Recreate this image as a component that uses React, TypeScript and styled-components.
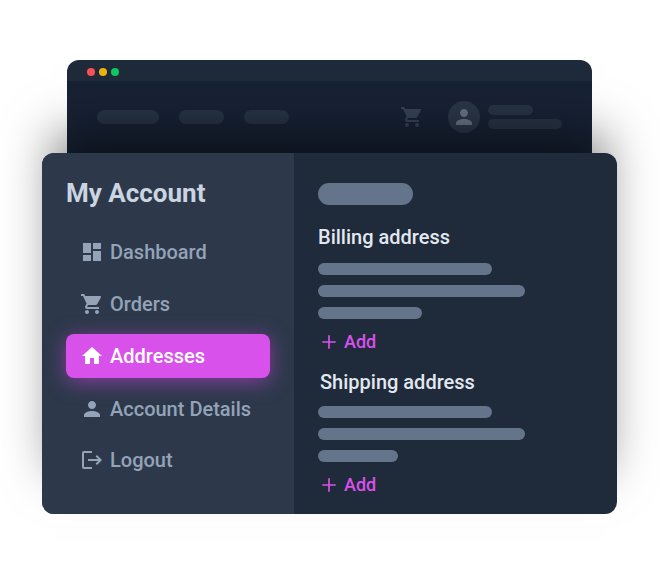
import React from "react";
import styled, { createGlobalStyle } from "styled-components";

const GlobalStyle = createGlobalStyle`
  * { box-sizing: border-box; }
  body { margin: 0; background: #fff; font-family: Roboto, sans-serif; }
`;

const Page = styled.main`
  width: 660px;
  height: 572px;
  padding: 60px 43px 0 42px;
  overflow: hidden;
  background: #fff;
`;

const BrowserWindow = styled.section`
  margin: 0 25px;
  height: 93px;
`;

const TitleBar = styled.div`
  height: 21px;
  display: flex;
  align-items: center;
  gap: 4px;
  padding: 3px 20px 0;
  border-radius: 12px 12px 0 0;
  background: #1f2a3b;
`;

const Dot = styled.span<{ $color: string }>`
  width: 8px;
  height: 8px;
  border-radius: 50%;
  background: ${(p) => p.$color};
`;

const SiteHeader = styled.header`
  height: 72px;
  display: flex;
  align-items: center;
  padding: 0 30px;
  background: #182235;
`;

const Nav = styled.nav`
  display: flex;
  gap: 20px;
  margin-right: auto;
`;

const Bar = styled.span<{ $w: number; $h: number; $color: string }>`
  display: block;
  width: ${(p) => p.$w}px;
  height: ${(p) => p.$h}px;
  border-radius: ${(p) => p.$h / 2}px;
  background: ${(p) => p.$color};
`;

const Avatar = styled.div`
  display: grid;
  place-items: center;
  width: 32px;
  height: 32px;
  margin: 0 8px 0 24px;
  border-radius: 50%;
  background: #2a3648;
  color: #677282;
`;

const UserLines = styled.div`
  width: 74px;
  display: flex;
  flex-direction: column;
  gap: 4px;
`;

const CartSlot = styled.div`
  display: flex;
  color: #364255;
`;

const Panel = styled.section`
  position: relative;
  display: flex;
  height: 361px;
  border-radius: 12px;
  background: #1f2a3b;
  box-shadow: 0 -31px 46px -12px rgba(0, 0, 0, 0.5);
`;

const Sidebar = styled.aside`
  width: 252px;
  padding: 24px 24px 0;
  border-radius: 12px 0 0 12px;
  background: #2d394b;
`;

const Title = styled.h1`
  margin: 0;
  font-size: 26px;
  line-height: 32px;
  font-weight: 700;
  color: #cbd5e1;
`;

const Menu = styled.ul`
  list-style: none;
  margin: 21px 0 0;
  padding: 0;
  display: flex;
  flex-direction: column;
  gap: 8px;
`;

const MenuItem = styled.li<{ $active?: boolean; $shift?: number }>`
  display: flex;
  align-items: center;
  gap: 6px;
  height: 44px;
  padding-left: 14px;
  margin-top: ${(p) => p.$shift ?? 0}px;
  border-radius: 8px;
  font-size: 20px;
  font-weight: 500;
  white-space: nowrap;
  color: ${(p) => (p.$active ? "#fff" : "#94a3b8")};
  background: ${(p) => (p.$active ? "#d951eb" : "transparent")};
  box-shadow: ${(p) => (p.$active ? "0 4px 20px rgba(217, 70, 239, 0.5)" : "none")};
`;

const Content = styled.div`
  flex: 1;
  padding: 30px 24px 0;
`;

const Address = styled.section<{ $top: number }>`
  margin-top: ${(p) => p.$top}px;
`;

const AddressTitle = styled.h2<{ $indent?: number }>`
  margin: 0;
  padding-left: ${(p) => p.$indent ?? 0}px;
  font-size: 20px;
  line-height: 24px;
  font-weight: 500;
  color: #e2e8f0;
`;

const Lines = styled.div<{ $top: number }>`
  display: flex;
  flex-direction: column;
  gap: 10px;
  margin-top: ${(p) => p.$top}px;
`;

const AddButton = styled.button`
  display: flex;
  align-items: center;
  gap: 8px;
  height: 22px;
  margin: 12px 0 0;
  padding: 0 0 0 4px;
  border: 0;
  background: none;
  font: 500 18px/22px Roboto, sans-serif;
  color: #d951eb;
`;

const icons = {
  dashboard: "M3 13h8V3H3v10zm0 8h8v-6H3v6zm10 0h8V11h-8v10zm0-18v6h8V3h-8z",
  cart: "M7 18c-1.1 0-1.99.9-1.99 2S5.9 22 7 22s2-.9 2-2-.9-2-2-2zM1 2v2h2l3.6 7.59-1.35 2.45c-.16.28-.25.61-.25.96 0 1.1.9 2 2 2h12v-2H7.42c-.14 0-.25-.11-.25-.25l.03-.12.9-1.63h7.45c.75 0 1.41-.41 1.75-1.03l3.58-6.49c.08-.14.12-.31.12-.48 0-.55-.45-1-1-1H5.21l-.94-2H1zm16 16c-1.1 0-1.99.9-1.99 2s.89 2 1.99 2 2-.9 2-2-.9-2-2-2z",
  home: "M10 20v-6h4v6h5v-8h3L12 3 2 12h3v8z",
  person: "M12 12c2.21 0 4-1.79 4-4s-1.79-4-4-4-4 1.79-4 4 1.79 4 4 4zm0 2c-2.67 0-8 1.34-8 4v2h16v-2c0-2.66-5.33-4-8-4z",
  logout: "m17 7-1.41 1.41L18.17 11H8v2h10.17l-2.58 2.58L17 17l5-5zM4 5h8V3H4c-1.1 0-2 .9-2 2v14c0 1.1.9 2 2 2h8v-2H4V5z",
};

const Icon = ({ name }: { name: keyof typeof icons }) => (
  <svg width="24" height="24" viewBox="0 0 24 24" fill="currentColor">
    <path d={icons[name]} />
  </svg>
);

const Add = () => (
  <AddButton>
    <svg width="14" height="14" viewBox="0 0 14 14" fill="none" stroke="currentColor" strokeWidth="1.7">
      <path d="M7 .3v13.4M.3 7h13.4" />
    </svg>
    Add
  </AddButton>
);

const line = "#64748b";
const muted = "#273345";

export default function App() {
  return (
    <>
      <GlobalStyle />
      <Page>
        <BrowserWindow>
          <TitleBar>
            <Dot $color="#fa5252" />
            <Dot $color="#eab310" />
            <Dot $color="#0fc663" />
          </TitleBar>
          <SiteHeader>
            <Nav>
              <Bar $w={62} $h={14} $color={muted} />
              <Bar $w={45} $h={14} $color={muted} />
              <Bar $w={45} $h={14} $color={muted} />
            </Nav>
            <CartSlot>
              <Icon name="cart" />
            </CartSlot>
            <Avatar>
              <Icon name="person" />
            </Avatar>
            <UserLines>
              <Bar $w={45} $h={10} $color={muted} />
              <Bar $w={74} $h={10} $color={muted} />
            </UserLines>
          </SiteHeader>
        </BrowserWindow>
        <Panel>
          <Sidebar>
            <Title>My Account</Title>
            <Menu>
              <MenuItem>
                <Icon name="dashboard" />
                Dashboard
              </MenuItem>
              <MenuItem>
                <Icon name="cart" />
                Orders
              </MenuItem>
              <MenuItem $active>
                <Icon name="home" />
                Addresses
              </MenuItem>
              <MenuItem $shift={1}>
                <Icon name="person" />
                Account Details
              </MenuItem>
              <MenuItem $shift={-1}>
                <Icon name="logout" />
                Logout
              </MenuItem>
            </Menu>
          </Sidebar>
          <Content>
            <Bar $w={95} $h={22} $color={line} />
            <Address $top={20}>
              <AddressTitle>Billing address</AddressTitle>
              <Lines $top={14}>
                <Bar $w={174} $h={12} $color={line} />
                <Bar $w={207} $h={12} $color={line} />
                <Bar $w={104} $h={12} $color={line} />
              </Lines>
              <Add />
            </Address>
            <Address $top={17}>
              <AddressTitle $indent={2}>Shipping address</AddressTitle>
              <Lines $top={12}>
                <Bar $w={174} $h={12} $color={line} />
                <Bar $w={207} $h={12} $color={line} />
                <Bar $w={80} $h={12} $color={line} />
              </Lines>
              <Add />
            </Address>
          </Content>
        </Panel>
      </Page>
    </>
  );
}
